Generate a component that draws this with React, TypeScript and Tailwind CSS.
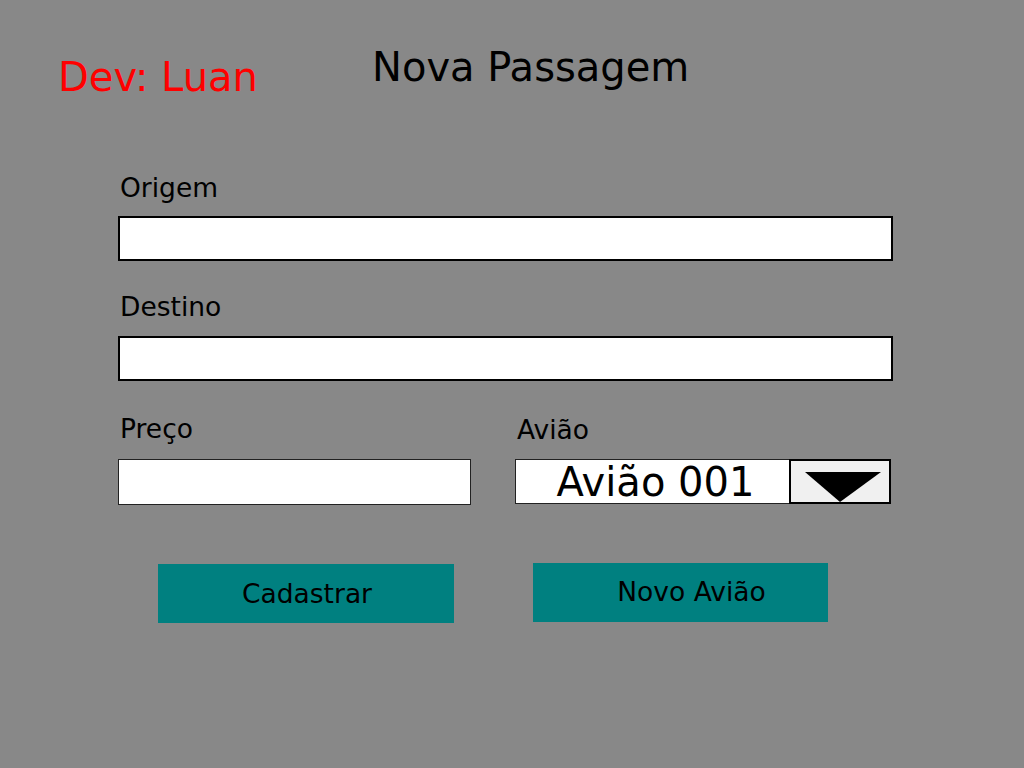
import React from "react";

export default function App() {
  return (
    <div className="w-[1024px] h-[768px] bg-[#888888] font-['DejaVu_Sans',sans-serif] text-black overflow-hidden">
      <div className="flex items-start h-[97px]">
        <div className="w-[315px] pl-[58px] pt-[57px] text-[40px] leading-[40px] text-[#ff0000] whitespace-nowrap">
          Dev: Luan
        </div>
        <div className="pt-[47px] pl-[57px] text-[40px] leading-[40px] whitespace-nowrap">
          Nova Passagem
        </div>
      </div>

      <div className="pl-[118px] mt-[78px] flex flex-col">
        <div className="text-[26.5px] leading-[26px] pl-[2px]">Origem</div>
        <div className="mt-[15px] w-[775px] h-[45px] border-2 border-black bg-white" />

        <div className="mt-[33px] text-[26.5px] leading-[26px] pl-[2px]">Destino</div>
        <div className="mt-[16px] w-[775px] h-[45px] border-2 border-black bg-white" />

        <div className="mt-[35px] flex items-start">
          <div className="w-[353px] flex flex-col">
            <div className="text-[26.5px] leading-[26px] pl-[2px]">Preço</div>
            <div className="mt-[17px] w-[353px] h-[46px] border border-[#222] bg-white" />
          </div>
          <div className="ml-[44px] flex flex-col">
            <div className="text-[26.5px] leading-[26px] pl-[2px] mt-[1px]">Avião</div>
            <div className="mt-[16px] flex h-[45px]">
              <div className="w-[274px] h-[45px] border border-[#222] border-r-0 bg-white flex items-center justify-center pl-[6px] text-[40px] leading-[40px] whitespace-nowrap">
                Avião 001
              </div>
              <div className="w-[102px] h-[45px] border-2 border-black bg-[#f0f0f0] relative">
                <svg
                  className="absolute left-0 top-0"
                  width="102"
                  height="45"
                  viewBox="0 0 102 45"
                >
                  <polygon points="14,11 90,11 49,41" fill="#000" />
                </svg>
              </div>
            </div>
          </div>
        </div>
      </div>

      <div className="mt-[58px] flex items-start">
        <div className="ml-[158px] mt-[1px] w-[296px] h-[59px] bg-[#008080] flex items-center justify-center text-[26.5px] leading-[26px] pl-[2px]">
          Cadastrar
        </div>
        <div className="ml-[79px] w-[295px] h-[59px] bg-[#008080] flex items-center justify-center text-[26.5px] leading-[26px] pl-[22px] pb-[2px]">
          Novo Avião
        </div>
      </div>
    </div>
  );
}
